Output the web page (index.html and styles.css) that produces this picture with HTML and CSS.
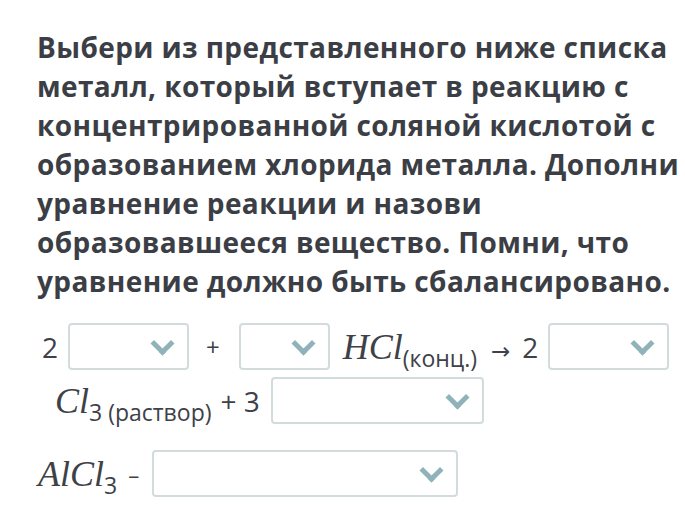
FILE: index.html
```
<!DOCTYPE html>
<html lang="ru">

<head>
    <meta charset="UTF-8">
    <meta name="viewport" content="width=device-width, initial-scale=1.0">
    <title>Задание</title>

    <link rel="stylesheet" href="styles.css">
</head>

<body>
    <div class="task">
        <p class="question">Выбери из представленного ниже списка металл, который вступает в реакцию с концентрированной соляной кислотой с образованием хлорида металла. Дополни уравнение реакции и назови образовавшееся вещество. Помни, что уравнение должно быть сбалансировано.</p>

        <div class="equation">
            <div class="line first">
                <span class="num">2</span>
                <div class="select w-120"></div>
                <span class="op">+</span>
                <div class="select w-90"></div>
                <span class="formula">HCl<sub>(конц.)</sub></span>
                <span class="arrow">→</span>
                <span class="num">2</span>
                <div class="select w-120"></div>
            </div>

            <div class="line second">
                <span class="formula">Cl<sub>3 (раствор)</sub></span>
                <span class="op">+ 3</span>
                <div class="select w-213"></div>
            </div>

            <div class="line third">
                <span class="formula">AlCl<sub>3</sub></span>
                <span class="dash">–</span>
                <div class="select w-305"></div>
            </div>
        </div>
    </div>
</body>

</html>
```

FILE: styles.css
```
body {
    margin: 0;
    background: #fff;
    color: #3b3e45;
    font-family: "Open Sans", sans-serif;
}

.task {
    padding: 28px 0 0 37px;
}

.question {
    margin: 0;
    width: 646px;
    font-size: 28px;
    font-weight: 700;
    line-height: 39px;
    letter-spacing: 0.4px;
}

.equation {
    margin-top: 22px;
    display: flex;
    flex-direction: column;
}

.line {
    display: flex;
    align-items: center;
}

.first {
    padding-left: 5px;
}

.second {
    margin-top: 7px;
    padding-left: 18px;
}

.third {
    margin-top: 26px;
    padding-left: 1px;
}

.num,
.op,
.dash {
    font-size: 28px;
    color: #3e4148;
}

.num {
    margin-right: 10px;
}

.op {
    margin: 0 11px 0 9px;
}

.first .op {
    margin: 0 19px 0 17px;
    font-size: 24px;
}

.dash {
    margin: 0 13px 0 11px;
    font-size: 22px;
}

.formula {
    font-family: "Liberation Serif", serif;
    font-style: italic;
    font-size: 36px;
    color: #3e4148;
    margin-left: 13px;
}

.line .formula:first-child {
    margin-left: 0;
}

.formula sub {
    font-family: "Open Sans", sans-serif;
    font-style: normal;
    font-size: 23px;
    vertical-align: -8px;
    line-height: 0;
}

.arrow {
    font-family: "DejaVu Sans", sans-serif;
    font-size: 23px;
    margin: 8px 12px 0 14px;
    color: #3e4148;
}

.select {
    box-sizing: border-box;
    height: 47px;
    border: 2px solid #d3dcdd;
    border-radius: 4px;
    position: relative;
}

.select::after {
    content: "";
    position: absolute;
    right: 16px;
    top: 10px;
    width: 12px;
    height: 12px;
    border-right: 5px solid #8fb3b9;
    border-bottom: 5px solid #8fb3b9;
    transform: rotate(45deg);
}

.w-120 {
    width: 121px;
}

.w-90 {
    width: 91px;
}

.w-213 {
    width: 213px;
}

.w-305 {
    width: 306px;
}
```
